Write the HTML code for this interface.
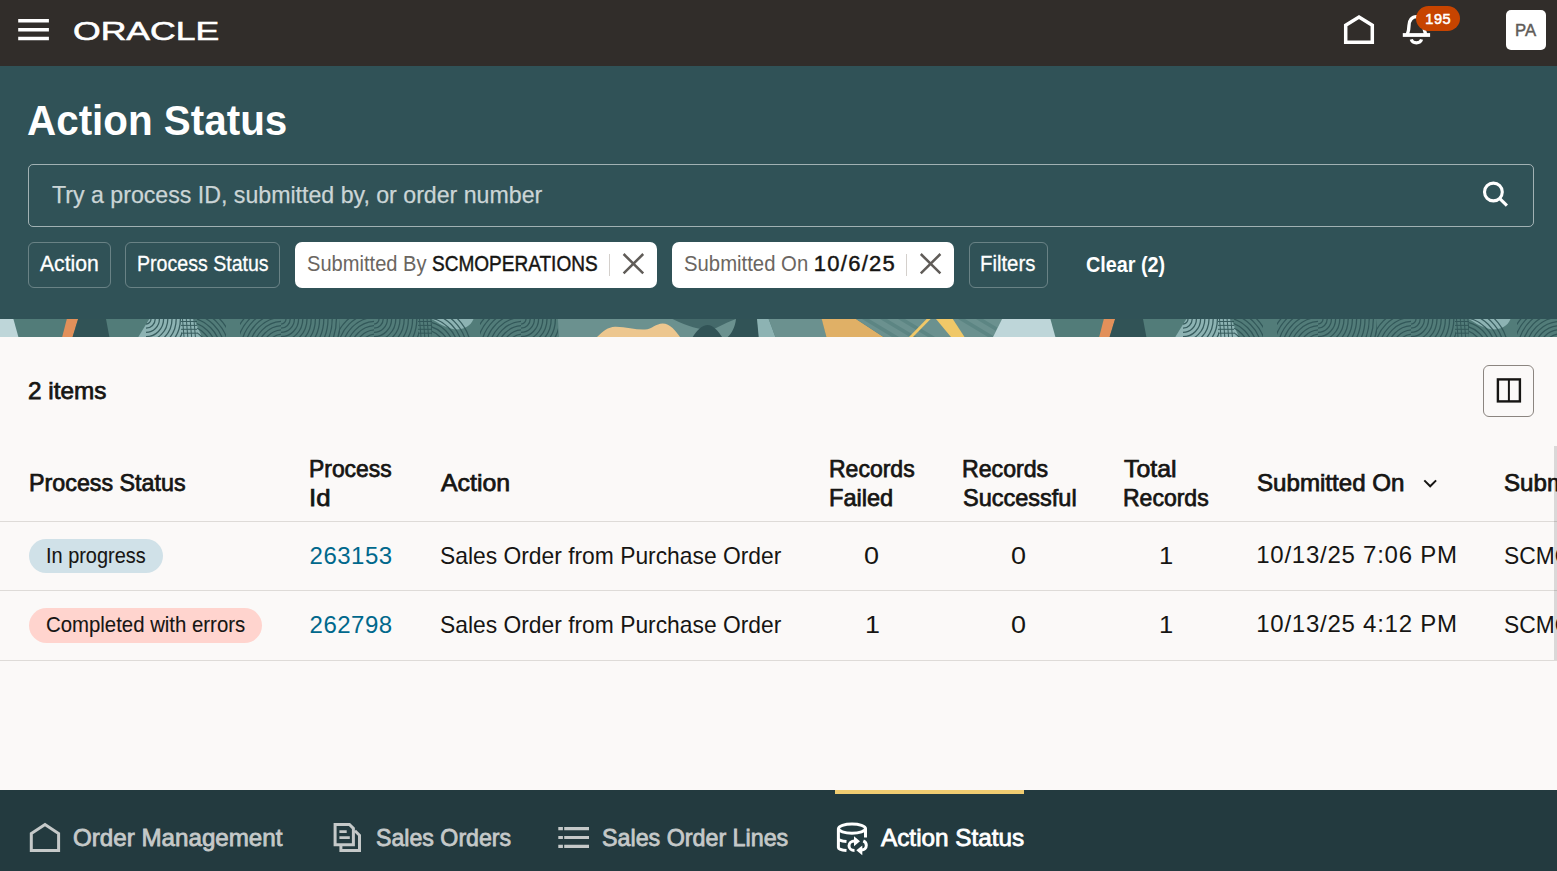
<!DOCTYPE html>
<html lang="en"><head><meta charset="utf-8"><title>Action Status</title>
<style>
html,body{margin:0;padding:0}
body{position:relative;width:1557px;height:871px;overflow:hidden;background:#fbf9f8;font-family:"Liberation Sans",sans-serif;}
.t{position:absolute;white-space:nowrap;line-height:1;transform-origin:0 0;display:block}
.b{position:absolute;display:block;box-sizing:border-box}
svg{position:absolute;overflow:visible}
a{text-decoration:none}
</style></head>
<body>
<header>
<i class="b" style="left:0px;top:0px;width:1557px;height:66px;background:#312d2a"></i>
<svg style="left:0;top:0" width="1557" height="66" viewBox="0 0 1557 66" fill="none" stroke="#fff"><path d="M18.2 20.7H48.9M18.2 29.7H48.9M18.2 38.5H48.9" stroke-width="3.4"/><path d="M1345.7 42.3V25.2L1359 17L1372.3 25.2V42.3Z" stroke-width="3.5" stroke-linejoin="miter"/><path d="M1402.8 35H1430.1" stroke-width="3.8"/><path d="M1407.3 34.5C1408.6 31 1409 28 1409 25.5C1409 20.5 1412 16.6 1416.5 16.6C1421 16.6 1424 20.5 1424 25.5C1424 28 1424.4 31 1425.7 34.5" stroke-width="3.4"/><path d="M1411.2 39.4C1412 42 1414 42.8 1416.4 42.8C1418.8 42.8 1420.8 42 1421.6 39.4" stroke-width="3.2"/></svg>
<span class="t" style="left:72.53px;top:18.00px;font-size:26.60px;color:#ffffff;transform:scaleX(1.3380);-webkit-text-stroke:0.6px #ffffff;">ORACLE</span>
<i class="b" style="left:1416px;top:6px;width:44px;height:25px;background:#c74400;border-radius:12.5px"></i>
<span class="t" style="left:1425.17px;top:12.00px;font-size:14.53px;color:#ffffff;letter-spacing:0.652px;-webkit-text-stroke:0.55px #ffffff;">195</span>
<i class="b" style="left:1506px;top:10px;width:40px;height:40px;background:#fff;border-radius:5px"></i>
<span class="t" style="left:1514.72px;top:23.00px;font-size:16.86px;color:#5f5b57;transform:scaleX(0.9923);-webkit-text-stroke:0.45px #5f5b57;">PA</span>
</header>
<section>
<i class="b" style="left:0px;top:66px;width:1557px;height:253px;background:#305257"></i>
<h1 style="margin:0;font-size:inherit;font-weight:inherit"><span class="t" style="left:26.97px;top:99.00px;font-size:42.59px;color:#ffffff;transform:scaleX(0.9486);font-weight:700;">Action Status</span></h1>
<i class="b" style="left:28px;top:164px;width:1506px;height:63px;border:1px solid rgba(255,255,255,.55);border-radius:5px"></i>
<span class="t" style="left:51.76px;top:183.00px;font-size:24.00px;color:#cbd5d6;transform:scaleX(0.9647);-webkit-text-stroke:0.25px #cbd5d6;">Try a process ID, submitted by, or order number</span>
<svg style="left:1480px;top:178px" width="30" height="30" viewBox="1480 178 30 30" fill="none" stroke="#fff" stroke-width="3.1"><circle cx="1493.4" cy="192" r="8.9"/><path d="M1499.6 198.3L1506.9 205.6"/></svg>
<div role="toolbar">
<div role="button"><i class="b" style="left:28px;top:242px;width:83px;height:46px;border:1px solid rgba(255,255,255,.28);border-radius:6px"></i><span class="t" style="left:40.05px;top:253.00px;font-size:22.00px;color:#ffffff;transform:scaleX(0.9615);-webkit-text-stroke:0.3px #ffffff;">Action</span></div>
<div role="button"><i class="b" style="left:125px;top:242px;width:155px;height:46px;border:1px solid rgba(255,255,255,.28);border-radius:6px"></i><span class="t" style="left:136.82px;top:253.00px;font-size:22.00px;color:#ffffff;transform:scaleX(0.8898);-webkit-text-stroke:0.3px #ffffff;">Process Status</span></div>
<i class="b" style="left:295px;top:242px;width:362px;height:46px;background:#fff;border-radius:7px"></i>
<span class="t" style="left:307.07px;top:253.00px;font-size:22.00px;color:#6b6661;transform:scaleX(0.9135);">Submitted By</span>
<span class="t" style="left:432.33px;top:253.00px;font-size:22.00px;color:#161513;transform:scaleX(0.8650);-webkit-text-stroke:0.45px #161513;">SCMOPERATIONS</span>
<i class="b" style="left:609px;top:253.5px;width:1px;height:22.5px;background:#d4d0cc"></i>
<i class="b" style="left:672px;top:242px;width:282px;height:46px;background:#fff;border-radius:7px"></i>
<span class="t" style="left:683.67px;top:253.00px;font-size:22.00px;color:#6b6661;transform:scaleX(0.9231);">Submitted On</span>
<span class="t" style="left:813.85px;top:253.00px;font-size:22.00px;color:#161513;letter-spacing:1.253px;-webkit-text-stroke:0.45px #161513;">10/6/25</span>
<i class="b" style="left:906px;top:253.5px;width:1px;height:22.5px;background:#d4d0cc"></i>
<svg style="left:0;top:240px" width="1557" height="50" viewBox="0 240 1557 50" fill="none" stroke="#605c58" stroke-width="2.5"><path d="M623.6 254L643.2 273.4M643.2 254L623.6 273.4"/><path d="M920.8 254L940.4 273.4M940.4 254L920.8 273.4"/></svg>
<div role="button"><i class="b" style="left:969px;top:242px;width:79px;height:46px;border:1px solid rgba(255,255,255,.28);border-radius:6px"></i><span class="t" style="left:980.46px;top:253.00px;font-size:22.00px;color:#ffffff;transform:scaleX(0.9238);-webkit-text-stroke:0.3px #ffffff;">Filters</span></div>
<div role="button"><span class="t" style="left:1086.18px;top:254.00px;font-size:21.80px;color:#ffffff;transform:scaleX(0.9072);font-weight:700;">Clear (2)</span></div>
</div>
<svg style="left:0;top:319px;overflow:hidden" width="1557" height="18" viewBox="0 319 1557 18"><rect x="0" y="319" width="1557" height="18" fill="#527c79"/><clipPath id="c1"><rect x="146" y="319" width="36" height="18"/></clipPath><clipPath id="c2"><rect x="181" y="319" width="16" height="18"/></clipPath><clipPath id="c3"><rect x="197" y="319" width="29" height="18"/></clipPath><clipPath id="c4"><rect x="240" y="319" width="41" height="18"/></clipPath><clipPath id="c5"><rect x="281" y="319" width="59" height="18"/></clipPath><clipPath id="c6"><rect x="340" y="319" width="34" height="18"/></clipPath><clipPath id="c7"><rect x="374" y="319" width="45" height="18"/></clipPath><clipPath id="c8"><rect x="418" y="319" width="14" height="18"/></clipPath><clipPath id="c9"><rect x="432" y="319" width="38" height="18"/></clipPath><clipPath id="c10"><rect x="480" y="319" width="41" height="18"/></clipPath><clipPath id="c11"><rect x="521" y="319" width="37" height="18"/></clipPath><g transform="translate(0 0)"><polygon points="-35.0,319.0 13.4,319.0 18.4,337.0 -44.0,337.0" fill="#bed6d9" /><polygon points="66.8,319.0 78.1,319.0 72.6,337.0 62.2,337.0" fill="#e2905a" /><polygon points="78.1,319.0 106.0,319.0 109.4,337.0 72.6,337.0" fill="#315356" /><polygon points="149.3,319.0 194.0,319.0 202.0,337.0 138.3,337.0" fill="#8db3b3" /><g clip-path="url(#c1)" fill="none" stroke="#2f5456" stroke-width="1.25" opacity="0.9"><circle cx="146" cy="319" r="5.0"/><circle cx="146" cy="319" r="9.2"/><circle cx="146" cy="319" r="13.4"/><circle cx="146" cy="319" r="17.6"/><circle cx="146" cy="319" r="21.8"/><circle cx="146" cy="319" r="26.0"/><circle cx="146" cy="319" r="30.2"/><circle cx="146" cy="319" r="34.4"/><circle cx="146" cy="319" r="38.6"/><circle cx="146" cy="319" r="42.8"/><circle cx="146" cy="319" r="47.0"/><circle cx="146" cy="319" r="51.2"/></g><g clip-path="url(#c2)" fill="none" stroke="#2f5456" stroke-width="1" opacity=".9"><path d="M182.5 319L184.0 337"/><path d="M186.3 319L187.8 337"/><path d="M190.1 319L191.6 337"/><path d="M193.9 319L195.4 337"/><path d="M181 321.5H197"/><path d="M181 325.4H197"/><path d="M181 329.3H197"/><path d="M181 333.2H197"/></g><g clip-path="url(#c3)" fill="none" stroke="#2f5456" stroke-width="1.25" opacity="0.9"><circle cx="186" cy="352" r="22.0"/><circle cx="186" cy="352" r="26.2"/><circle cx="186" cy="352" r="30.4"/><circle cx="186" cy="352" r="34.6"/><circle cx="186" cy="352" r="38.8"/><circle cx="186" cy="352" r="43.0"/><circle cx="186" cy="352" r="47.2"/></g><g clip-path="url(#c4)" fill="none" stroke="#2f5456" stroke-width="1.25" opacity="0.9"><circle cx="283" cy="351" r="17.0"/><circle cx="283" cy="351" r="21.2"/><circle cx="283" cy="351" r="25.4"/><circle cx="283" cy="351" r="29.6"/><circle cx="283" cy="351" r="33.8"/><circle cx="283" cy="351" r="38.0"/><circle cx="283" cy="351" r="42.2"/><circle cx="283" cy="351" r="46.4"/><circle cx="283" cy="351" r="50.6"/></g><g clip-path="url(#c5)" fill="none" stroke="#2f5456" stroke-width="1.25" opacity="0.9"><circle cx="281" cy="319" r="5.0"/><circle cx="281" cy="319" r="9.2"/><circle cx="281" cy="319" r="13.4"/><circle cx="281" cy="319" r="17.6"/><circle cx="281" cy="319" r="21.8"/><circle cx="281" cy="319" r="26.0"/><circle cx="281" cy="319" r="30.2"/><circle cx="281" cy="319" r="34.4"/><circle cx="281" cy="319" r="38.6"/><circle cx="281" cy="319" r="42.8"/><circle cx="281" cy="319" r="47.0"/><circle cx="281" cy="319" r="51.2"/><circle cx="281" cy="319" r="55.4"/><circle cx="281" cy="319" r="59.6"/><circle cx="281" cy="319" r="63.8"/><circle cx="281" cy="319" r="68.0"/><circle cx="281" cy="319" r="72.2"/></g><g clip-path="url(#c6)" fill="none" stroke="#2f5456" stroke-width="1.25" opacity="0.9"><circle cx="376" cy="351" r="17.0"/><circle cx="376" cy="351" r="21.2"/><circle cx="376" cy="351" r="25.4"/><circle cx="376" cy="351" r="29.6"/><circle cx="376" cy="351" r="33.8"/><circle cx="376" cy="351" r="38.0"/><circle cx="376" cy="351" r="42.2"/></g><g clip-path="url(#c7)" fill="none" stroke="#2f5456" stroke-width="1.25" opacity="0.9"><circle cx="374" cy="319" r="5.0"/><circle cx="374" cy="319" r="9.2"/><circle cx="374" cy="319" r="13.4"/><circle cx="374" cy="319" r="17.6"/><circle cx="374" cy="319" r="21.8"/><circle cx="374" cy="319" r="26.0"/><circle cx="374" cy="319" r="30.2"/><circle cx="374" cy="319" r="34.4"/><circle cx="374" cy="319" r="38.6"/><circle cx="374" cy="319" r="42.8"/><circle cx="374" cy="319" r="47.0"/><circle cx="374" cy="319" r="51.2"/><circle cx="374" cy="319" r="55.4"/><circle cx="374" cy="319" r="59.6"/></g><g clip-path="url(#c8)" fill="none" stroke="#2f5456" stroke-width="1" opacity=".9"><path d="M419.5 319L421.0 337"/><path d="M423.3 319L424.8 337"/><path d="M427.1 319L428.6 337"/><path d="M430.9 319L432.4 337"/><path d="M418 321.5H432"/><path d="M418 325.4H432"/><path d="M418 329.3H432"/><path d="M418 333.2H432"/></g><path d="M431.8 319H473.5C471 326 463 330 455 329.5C446 328 438 323 431.8 319Z" fill="#8db3b3"/><g clip-path="url(#c9)" fill="none" stroke="#2f5456" stroke-width="1.25" opacity="0.9"><circle cx="424" cy="352" r="22.0"/><circle cx="424" cy="352" r="26.2"/><circle cx="424" cy="352" r="30.4"/><circle cx="424" cy="352" r="34.6"/><circle cx="424" cy="352" r="38.8"/><circle cx="424" cy="352" r="43.0"/><circle cx="424" cy="352" r="47.2"/></g><g clip-path="url(#c10)" fill="none" stroke="#2f5456" stroke-width="1.25" opacity="0.9"><circle cx="523" cy="351" r="17.0"/><circle cx="523" cy="351" r="21.2"/><circle cx="523" cy="351" r="25.4"/><circle cx="523" cy="351" r="29.6"/><circle cx="523" cy="351" r="33.8"/><circle cx="523" cy="351" r="38.0"/><circle cx="523" cy="351" r="42.2"/><circle cx="523" cy="351" r="46.4"/><circle cx="523" cy="351" r="50.6"/></g><g clip-path="url(#c11)" fill="none" stroke="#2f5456" stroke-width="1.25" opacity="0.9"><circle cx="521" cy="319" r="5.0"/><circle cx="521" cy="319" r="9.2"/><circle cx="521" cy="319" r="13.4"/><circle cx="521" cy="319" r="17.6"/><circle cx="521" cy="319" r="21.8"/><circle cx="521" cy="319" r="26.0"/><circle cx="521" cy="319" r="30.2"/><circle cx="521" cy="319" r="34.4"/><circle cx="521" cy="319" r="38.6"/><circle cx="521" cy="319" r="42.8"/><circle cx="521" cy="319" r="47.0"/><circle cx="521" cy="319" r="51.2"/></g><polygon points="557.9,319.0 740.0,319.0 740.0,337.0 559.0,337.0" fill="#6b918f" /><path d="M597 337C603 331 608 327 615 326.7C626 326.5 636 330 645 329.5C652 329 656 323.4 662.6 323.4C670 323.4 676 331 680 337Z" fill="#edc78f"/><path d="M672.5 319H736C730 321 724 324 716 328C708 331.5 696 330 672.5 319Z" fill="#44696a"/><path d="M692.7 337C697 330 702 325 707.7 325C713 325 718 331 722 337Z" fill="#315356"/><path d="M736 319H757.3L759.2 337H727.7C732 333 735 327 736 319Z" fill="#315356"/><polygon points="757.0,319.0 768.7,319.0 775.4,337.0 758.7,337.0" fill="#8db3b3" /><polygon points="768.7,319.0 822.0,319.0 826.4,337.0 775.4,337.0" fill="#6b918f" /><polygon points="821.7,319.0 856.0,319.0 883.5,337.0 826.4,337.0" fill="#e0b066" /><polygon points="856.0,319.0 1002.0,319.0 992.9,337.0 883.5,337.0" fill="#6b918f" /><polygon points="862.0,319.0 869.0,319.0 899.0,337.0 892.0,337.0" fill="#5c8583" /><polygon points="880.0,319.0 887.0,319.0 917.0,337.0 910.0,337.0" fill="#5c8583" /><polygon points="898.0,319.0 905.0,319.0 935.0,337.0 928.0,337.0" fill="#5c8583" /><polygon points="958.0,319.0 965.0,319.0 995.0,337.0 988.0,337.0" fill="#5c8583" /><polygon points="976.0,319.0 983.0,319.0 1013.0,337.0 1006.0,337.0" fill="#5c8583" /><polygon points="926.6,319.0 930.6,319.0 913.0,337.0 909.0,337.0" fill="#f0c868" /><polygon points="936.0,319.0 952.8,319.0 964.5,337.0 951.0,337.0" fill="#f0c868" /></g><clipPath id="c12"><rect x="146" y="319" width="36" height="18"/></clipPath><clipPath id="c13"><rect x="181" y="319" width="16" height="18"/></clipPath><clipPath id="c14"><rect x="197" y="319" width="29" height="18"/></clipPath><clipPath id="c15"><rect x="240" y="319" width="41" height="18"/></clipPath><clipPath id="c16"><rect x="281" y="319" width="59" height="18"/></clipPath><clipPath id="c17"><rect x="340" y="319" width="34" height="18"/></clipPath><clipPath id="c18"><rect x="374" y="319" width="45" height="18"/></clipPath><clipPath id="c19"><rect x="418" y="319" width="14" height="18"/></clipPath><clipPath id="c20"><rect x="432" y="319" width="38" height="18"/></clipPath><clipPath id="c21"><rect x="480" y="319" width="41" height="18"/></clipPath><clipPath id="c22"><rect x="521" y="319" width="37" height="18"/></clipPath><g transform="translate(1037 0)"><polygon points="-35.0,319.0 13.4,319.0 18.4,337.0 -44.0,337.0" fill="#bed6d9" /><polygon points="66.8,319.0 78.1,319.0 72.6,337.0 62.2,337.0" fill="#e2905a" /><polygon points="78.1,319.0 106.0,319.0 109.4,337.0 72.6,337.0" fill="#315356" /><polygon points="149.3,319.0 194.0,319.0 202.0,337.0 138.3,337.0" fill="#8db3b3" /><g clip-path="url(#c12)" fill="none" stroke="#2f5456" stroke-width="1.25" opacity="0.9"><circle cx="146" cy="319" r="5.0"/><circle cx="146" cy="319" r="9.2"/><circle cx="146" cy="319" r="13.4"/><circle cx="146" cy="319" r="17.6"/><circle cx="146" cy="319" r="21.8"/><circle cx="146" cy="319" r="26.0"/><circle cx="146" cy="319" r="30.2"/><circle cx="146" cy="319" r="34.4"/><circle cx="146" cy="319" r="38.6"/><circle cx="146" cy="319" r="42.8"/><circle cx="146" cy="319" r="47.0"/><circle cx="146" cy="319" r="51.2"/></g><g clip-path="url(#c13)" fill="none" stroke="#2f5456" stroke-width="1" opacity=".9"><path d="M182.5 319L184.0 337"/><path d="M186.3 319L187.8 337"/><path d="M190.1 319L191.6 337"/><path d="M193.9 319L195.4 337"/><path d="M181 321.5H197"/><path d="M181 325.4H197"/><path d="M181 329.3H197"/><path d="M181 333.2H197"/></g><g clip-path="url(#c14)" fill="none" stroke="#2f5456" stroke-width="1.25" opacity="0.9"><circle cx="186" cy="352" r="22.0"/><circle cx="186" cy="352" r="26.2"/><circle cx="186" cy="352" r="30.4"/><circle cx="186" cy="352" r="34.6"/><circle cx="186" cy="352" r="38.8"/><circle cx="186" cy="352" r="43.0"/><circle cx="186" cy="352" r="47.2"/></g><g clip-path="url(#c15)" fill="none" stroke="#2f5456" stroke-width="1.25" opacity="0.9"><circle cx="283" cy="351" r="17.0"/><circle cx="283" cy="351" r="21.2"/><circle cx="283" cy="351" r="25.4"/><circle cx="283" cy="351" r="29.6"/><circle cx="283" cy="351" r="33.8"/><circle cx="283" cy="351" r="38.0"/><circle cx="283" cy="351" r="42.2"/><circle cx="283" cy="351" r="46.4"/><circle cx="283" cy="351" r="50.6"/></g><g clip-path="url(#c16)" fill="none" stroke="#2f5456" stroke-width="1.25" opacity="0.9"><circle cx="281" cy="319" r="5.0"/><circle cx="281" cy="319" r="9.2"/><circle cx="281" cy="319" r="13.4"/><circle cx="281" cy="319" r="17.6"/><circle cx="281" cy="319" r="21.8"/><circle cx="281" cy="319" r="26.0"/><circle cx="281" cy="319" r="30.2"/><circle cx="281" cy="319" r="34.4"/><circle cx="281" cy="319" r="38.6"/><circle cx="281" cy="319" r="42.8"/><circle cx="281" cy="319" r="47.0"/><circle cx="281" cy="319" r="51.2"/><circle cx="281" cy="319" r="55.4"/><circle cx="281" cy="319" r="59.6"/><circle cx="281" cy="319" r="63.8"/><circle cx="281" cy="319" r="68.0"/><circle cx="281" cy="319" r="72.2"/></g><g clip-path="url(#c17)" fill="none" stroke="#2f5456" stroke-width="1.25" opacity="0.9"><circle cx="376" cy="351" r="17.0"/><circle cx="376" cy="351" r="21.2"/><circle cx="376" cy="351" r="25.4"/><circle cx="376" cy="351" r="29.6"/><circle cx="376" cy="351" r="33.8"/><circle cx="376" cy="351" r="38.0"/><circle cx="376" cy="351" r="42.2"/></g><g clip-path="url(#c18)" fill="none" stroke="#2f5456" stroke-width="1.25" opacity="0.9"><circle cx="374" cy="319" r="5.0"/><circle cx="374" cy="319" r="9.2"/><circle cx="374" cy="319" r="13.4"/><circle cx="374" cy="319" r="17.6"/><circle cx="374" cy="319" r="21.8"/><circle cx="374" cy="319" r="26.0"/><circle cx="374" cy="319" r="30.2"/><circle cx="374" cy="319" r="34.4"/><circle cx="374" cy="319" r="38.6"/><circle cx="374" cy="319" r="42.8"/><circle cx="374" cy="319" r="47.0"/><circle cx="374" cy="319" r="51.2"/><circle cx="374" cy="319" r="55.4"/><circle cx="374" cy="319" r="59.6"/></g><g clip-path="url(#c19)" fill="none" stroke="#2f5456" stroke-width="1" opacity=".9"><path d="M419.5 319L421.0 337"/><path d="M423.3 319L424.8 337"/><path d="M427.1 319L428.6 337"/><path d="M430.9 319L432.4 337"/><path d="M418 321.5H432"/><path d="M418 325.4H432"/><path d="M418 329.3H432"/><path d="M418 333.2H432"/></g><path d="M431.8 319H473.5C471 326 463 330 455 329.5C446 328 438 323 431.8 319Z" fill="#8db3b3"/><g clip-path="url(#c20)" fill="none" stroke="#2f5456" stroke-width="1.25" opacity="0.9"><circle cx="424" cy="352" r="22.0"/><circle cx="424" cy="352" r="26.2"/><circle cx="424" cy="352" r="30.4"/><circle cx="424" cy="352" r="34.6"/><circle cx="424" cy="352" r="38.8"/><circle cx="424" cy="352" r="43.0"/><circle cx="424" cy="352" r="47.2"/></g><g clip-path="url(#c21)" fill="none" stroke="#2f5456" stroke-width="1.25" opacity="0.9"><circle cx="523" cy="351" r="17.0"/><circle cx="523" cy="351" r="21.2"/><circle cx="523" cy="351" r="25.4"/><circle cx="523" cy="351" r="29.6"/><circle cx="523" cy="351" r="33.8"/><circle cx="523" cy="351" r="38.0"/><circle cx="523" cy="351" r="42.2"/><circle cx="523" cy="351" r="46.4"/><circle cx="523" cy="351" r="50.6"/></g><g clip-path="url(#c22)" fill="none" stroke="#2f5456" stroke-width="1.25" opacity="0.9"><circle cx="521" cy="319" r="5.0"/><circle cx="521" cy="319" r="9.2"/><circle cx="521" cy="319" r="13.4"/><circle cx="521" cy="319" r="17.6"/><circle cx="521" cy="319" r="21.8"/><circle cx="521" cy="319" r="26.0"/><circle cx="521" cy="319" r="30.2"/><circle cx="521" cy="319" r="34.4"/><circle cx="521" cy="319" r="38.6"/><circle cx="521" cy="319" r="42.8"/><circle cx="521" cy="319" r="47.0"/><circle cx="521" cy="319" r="51.2"/></g><polygon points="557.9,319.0 740.0,319.0 740.0,337.0 559.0,337.0" fill="#6b918f" /><path d="M597 337C603 331 608 327 615 326.7C626 326.5 636 330 645 329.5C652 329 656 323.4 662.6 323.4C670 323.4 676 331 680 337Z" fill="#edc78f"/><path d="M672.5 319H736C730 321 724 324 716 328C708 331.5 696 330 672.5 319Z" fill="#44696a"/><path d="M692.7 337C697 330 702 325 707.7 325C713 325 718 331 722 337Z" fill="#315356"/><path d="M736 319H757.3L759.2 337H727.7C732 333 735 327 736 319Z" fill="#315356"/><polygon points="757.0,319.0 768.7,319.0 775.4,337.0 758.7,337.0" fill="#8db3b3" /><polygon points="768.7,319.0 822.0,319.0 826.4,337.0 775.4,337.0" fill="#6b918f" /><polygon points="821.7,319.0 856.0,319.0 883.5,337.0 826.4,337.0" fill="#e0b066" /><polygon points="856.0,319.0 1002.0,319.0 992.9,337.0 883.5,337.0" fill="#6b918f" /><polygon points="862.0,319.0 869.0,319.0 899.0,337.0 892.0,337.0" fill="#5c8583" /><polygon points="880.0,319.0 887.0,319.0 917.0,337.0 910.0,337.0" fill="#5c8583" /><polygon points="898.0,319.0 905.0,319.0 935.0,337.0 928.0,337.0" fill="#5c8583" /><polygon points="958.0,319.0 965.0,319.0 995.0,337.0 988.0,337.0" fill="#5c8583" /><polygon points="976.0,319.0 983.0,319.0 1013.0,337.0 1006.0,337.0" fill="#5c8583" /><polygon points="926.6,319.0 930.6,319.0 913.0,337.0 909.0,337.0" fill="#f0c868" /><polygon points="936.0,319.0 952.8,319.0 964.5,337.0 951.0,337.0" fill="#f0c868" /></g></svg>
</section>
<main>
<span class="t" style="left:27.94px;top:379.00px;font-size:24.00px;color:#161513;transform:scaleX(1.0128);-webkit-text-stroke:0.75px #161513;">2 items</span>
<i class="b" style="left:1483px;top:365px;width:51px;height:52px;border:1px solid #8b8580;border-radius:6px"></i>
<svg style="left:1490px;top:372px" width="36" height="36" viewBox="1490 372 36 36" fill="none" stroke="#161513"><rect x="1497.9" y="379.4" width="22" height="22" stroke-width="2.4"/><path d="M1508.9 379.4V401.4" stroke-width="2"/></svg>
<div role="table">
<div role="row">
<span class="t" style="left:28.56px;top:471.00px;font-size:24.00px;color:#161513;transform:scaleX(0.9702);-webkit-text-stroke:0.75px #161513;">Process Status</span>
<span class="t" style="left:308.89px;top:457.00px;font-size:24.00px;color:#161513;transform:scaleX(0.9534);-webkit-text-stroke:0.75px #161513;">Process</span>
<span class="t" style="left:308.66px;top:486.00px;font-size:24.00px;color:#161513;transform:scaleX(1.0749);-webkit-text-stroke:0.75px #161513;">Id</span>
<span class="t" style="left:440.88px;top:471.00px;font-size:24.00px;color:#161513;transform:scaleX(1.0366);-webkit-text-stroke:0.75px #161513;">Action</span>
<span class="t" style="left:829.28px;top:457.00px;font-size:24.00px;color:#161513;transform:scaleX(0.9586);-webkit-text-stroke:0.75px #161513;">Records</span>
<span class="t" style="left:829.23px;top:486.00px;font-size:24.00px;color:#161513;transform:scaleX(0.9824);-webkit-text-stroke:0.75px #161513;">Failed</span>
<span class="t" style="left:962.07px;top:457.00px;font-size:24.00px;color:#161513;transform:scaleX(0.9644);-webkit-text-stroke:0.75px #161513;">Records</span>
<span class="t" style="left:962.94px;top:486.00px;font-size:24.00px;color:#161513;transform:scaleX(0.9792);-webkit-text-stroke:0.75px #161513;">Successful</span>
<span class="t" style="left:1124.29px;top:457.00px;font-size:24.00px;color:#161513;transform:scaleX(1.0351);-webkit-text-stroke:0.75px #161513;">Total</span>
<span class="t" style="left:1123.38px;top:486.00px;font-size:24.00px;color:#161513;transform:scaleX(0.9586);-webkit-text-stroke:0.75px #161513;">Records</span>
<span class="t" style="left:1256.52px;top:471.00px;font-size:24.00px;color:#161513;transform:scaleX(1.0049);-webkit-text-stroke:0.75px #161513;">Submitted On</span>
<svg style="left:1420px;top:476px" width="20" height="16" viewBox="1420 476 20 16" fill="none" stroke="#161513" stroke-width="2"><path d="M1424.3 480.4L1430.2 486.3L1436.1 480.4"/></svg>
<span class="t" style="left:1504.2px;top:471px;font-size:24.00px;color:#161513;transform:scaleX(1.0049);-webkit-text-stroke:.75px #161513">Submitted By</span>
</div>
<i class="b" style="left:0px;top:521px;width:1557px;height:1px;background:#dedbd8"></i>
<i class="b" style="left:0px;top:590px;width:1557px;height:1px;background:#dedbd8"></i>
<i class="b" style="left:0px;top:660px;width:1557px;height:1px;background:#dedbd8"></i>
<i class="b" style="left:29px;top:539px;width:134px;height:34px;background:#d0e1e8;border-radius:17px"></i>
<span class="t" style="left:45.99px;top:545.00px;font-size:21.80px;color:#161513;transform:scaleX(0.9140);-webkit-text-stroke:0.1px #161513;">In progress</span>
<a href="#"><span class="t" style="left:309.57px;top:544.00px;font-size:24.00px;color:#00688c;letter-spacing:0.502px;">263153</span></a>
<span class="t" style="left:439.69px;top:544.00px;font-size:24.00px;color:#161513;transform:scaleX(0.9513);">Sales Order from Purchase Order</span>
<span class="t" style="left:864.46px;top:544.00px;font-size:24.00px;color:#161513;transform:scaleX(1.1250);">0</span>
<span class="t" style="left:1011.46px;top:544.00px;font-size:24.00px;color:#161513;transform:scaleX(1.1250);">0</span>
<span class="t" style="left:1159.10px;top:544.00px;font-size:24.00px;color:#161513;transform:scaleX(1.0667);">1</span>
<span class="t" style="left:1256.20px;top:543.00px;font-size:24.00px;color:#161513;letter-spacing:0.750px;">10/13/25 7:06 PM</span>
<span class="t" style="left:1504.0px;top:544px;font-size:24.00px;color:#161513;transform:scaleX(0.9513)">SCMOPERATIONS</span>
<i class="b" style="left:29px;top:608px;width:233px;height:35px;background:#ffd4ce;border-radius:17.5px"></i>
<span class="t" style="left:45.80px;top:614.00px;font-size:21.80px;color:#161513;transform:scaleX(0.9342);-webkit-text-stroke:0.1px #161513;">Completed with errors</span>
<a href="#"><span class="t" style="left:309.57px;top:613.00px;font-size:24.00px;color:#00688c;letter-spacing:0.502px;">262798</span></a>
<span class="t" style="left:439.69px;top:613.00px;font-size:24.00px;color:#161513;transform:scaleX(0.9513);">Sales Order from Purchase Order</span>
<span class="t" style="left:864.92px;top:613.00px;font-size:24.00px;color:#161513;transform:scaleX(1.1218);">1</span>
<span class="t" style="left:1011.46px;top:613.00px;font-size:24.00px;color:#161513;transform:scaleX(1.1250);">0</span>
<span class="t" style="left:1159.10px;top:613.00px;font-size:24.00px;color:#161513;transform:scaleX(1.0667);">1</span>
<span class="t" style="left:1256.20px;top:612.00px;font-size:24.00px;color:#161513;letter-spacing:0.750px;">10/13/25 4:12 PM</span>
<span class="t" style="left:1504.0px;top:613px;font-size:24.00px;color:#161513;transform:scaleX(0.9513)">SCMOPERATIONS</span>
</div>
<i class="b" style="left:1553.5px;top:446px;width:4px;height:214px;background:rgba(0,0,0,.13)"></i>
</main>
<nav>
<i class="b" style="left:0px;top:790px;width:1557px;height:81px;background:#233a3f"></i>
<i class="b" style="left:835px;top:790px;width:189px;height:4px;background:#f0cc71"></i>
<svg style="left:0;top:790px" width="1557" height="81" viewBox="0 790 1557 81" fill="none" stroke="#c5c9c9" stroke-width="3"><path d="M31.3 850.5V833.5L45 824.5L58.6 833.5V850.5Z"/><path d="M335.1 824.4H349.4L353.4 828.4V844.7H335.1Z"/><path d="M339.4 831.7H346.7M339.4 837.6H349.8" stroke-width="2.8"/><path d="M340.9 846V850.4H359.5V835.3L354.9 830.7"/><path d="M558.3 828.6H562.9M564.2 828.6H589M558.3 837.5H562.9M564.2 837.5H589M558.3 846.4H562.9M564.2 846.4H589" stroke-width="3.2"/><g stroke="#fff"><ellipse cx="852" cy="828.6" rx="13.5" ry="4.6"/><path d="M838.4 828.6V847.6C838.4 849 841.5 850.2 846.5 850.6M838.4 838.6C838.4 840 841.5 841.2 846.5 841.6M865.5 828.6V837.5"/><path d="M854.5 841C851.5 841 849 843 849 845.7C849 848.4 851.5 850.4 854.5 850.4" stroke-width="3"/><path d="M861.5 850C864.3 850 866.3 848 866.3 845.3C866.3 843.3 865 841.6 863.3 840.8" stroke-width="3"/><path d="M854 836.2L860 841.2L854 846.2Z" fill="#fff" stroke="none"/><path d="M862.3 845.4L856.3 850.3L862.3 855.2Z" fill="#fff" stroke="none"/></g></svg>
<a href="#"><span class="t" style="left:73.27px;top:826.00px;font-size:24.00px;color:#c5c9c9;transform:scaleX(1.0065);-webkit-text-stroke:0.8px #c5c9c9;">Order Management</span></a>
<a href="#"><span class="t" style="left:375.58px;top:826.00px;font-size:24.00px;color:#c5c9c9;transform:scaleX(0.9650);-webkit-text-stroke:0.8px #c5c9c9;">Sales Orders</span></a>
<a href="#"><span class="t" style="left:602.47px;top:826.00px;font-size:24.00px;color:#c5c9c9;transform:scaleX(0.9696);-webkit-text-stroke:0.8px #c5c9c9;">Sales Order Lines</span></a>
<a href="#"><span class="t" style="left:881.40px;top:826.00px;font-size:24.00px;color:#ffffff;transform:scaleX(1.0131);-webkit-text-stroke:0.8px #ffffff;">Action Status</span></a>
</nav>
</body></html>
